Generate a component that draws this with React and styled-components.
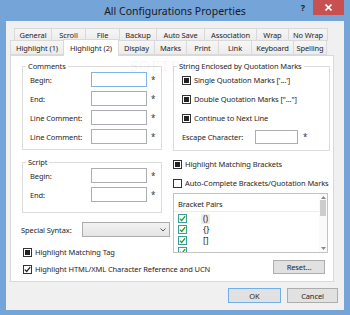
import React from 'react';
import styled, { createGlobalStyle } from 'styled-components';

const Global = createGlobalStyle`
  html, body { margin: 0; padding: 0; }
  body {
    width: 350px; height: 315px; overflow: hidden;
    font-family: "Noto Sans", "Open Sans", sans-serif;
    font-size: 7.5px; letter-spacing: -0.1px; color: #1e1e1e;
  }
  * { box-sizing: border-box; }
`;

const Window = styled.div`
  width: 350px; height: 315px; background: #74a4d8;
  display: flex; flex-direction: column; position: relative;
`;

const TitleBar = styled.div`
  height: 21px; flex: none;
  display: grid; grid-template-columns: 1fr auto 1fr; align-items: start;
`;
const Title = styled.div`
  grid-column: 2; font-size: 10.5px; letter-spacing: 0; line-height: 22px; color: #1a1a1a;
`;
const Controls = styled.div`
  grid-column: 3; justify-self: end; display: flex; align-items: flex-start; margin-right: 6px;
`;
const Help = styled.span`
  font-weight: bold; font-size: 9px; line-height: 16px; margin-right: 8px; color: #222;
`;
const Close = styled.div`
  width: 31px; height: 15px; background: #c75050;
  display: flex; align-items: center; justify-content: center;
`;

const Client = styled.div`
  flex: 1; margin: 0 6px 5px 6px; background: #f0f0f0;
  padding: 7px 6px 0 4px; display: flex; flex-direction: column;
`;

const TabRow = styled.div`
  display: flex; align-items: flex-end; height: ${p => p.$h}px;
  margin-left: ${p => p.$indent}px; margin-top: ${p => p.$mt || 0}px;
`;
const Tab = styled.div`
  width: ${p => p.$w}px; height: 100%; flex: none;
  border: 1px solid #d9d9d9; margin-right: -1px;
  background: linear-gradient(#f6f6f6, #ececec); color: #1e1e1e;
  display: flex; align-items: center; justify-content: center;
  white-space: nowrap; line-height: 10px;
`;
const ActiveTab = styled(Tab)`
  background: #fff; height: 17px; border-bottom: none;
  margin-bottom: -1px; position: relative; z-index: 1;
  align-items: flex-start; padding-top: 3px;
`;

const Panel = styled.div`
  width: 324px; height: 227px; flex: none; background: #fff;
  border: 1px solid #d9d9d9;
  display: grid; grid-template-columns: 149px 157px; column-gap: 3px;
  padding: 5px 0 0 10px; align-items: start;
`;
const Column = styled.div`
  display: flex; flex-direction: column; align-items: flex-start;
`;

const Group = styled.fieldset`
  margin: ${p => p.$mt || 0}px 0 0 ${p => p.$ml || 0}px;
  width: ${p => p.$w}px; min-width: 0;
  border: 1px solid #dcdcdc;
  padding: ${p => p.$pt}px 0 ${p => p.$pb}px ${p => p.$pl}px;
  display: flex; flex-direction: column; gap: ${p => p.$gap || 0}px;
`;
const Legend = styled.legend`
  padding: 0 2px; margin-left: ${p => p.$ml || 0}px; line-height: 10px;
`;

const FieldRow = styled.div`
  display: flex; align-items: center; height: 15px; margin-top: ${p => p.$mt || 0}px;
`;
const FieldLabel = styled.span`
  width: ${p => p.$w}px; flex: none; white-space: nowrap;
`;
const Input = styled.div`
  width: ${p => p.$w}px; height: ${p => p.$h || 15}px; flex: none; background: #fff;
  border: 1px solid ${p => (p.$focus ? '#7eb4ea' : '#abadb3')};
`;
const Star = styled.span`
  margin-left: ${p => p.$ml || 4}px; font-size: 8px; line-height: 8px; color: #333;
`;

const Select = styled.div`
  width: 88px; height: 15px; flex: none;
  border: 1px solid #acacac; background: linear-gradient(#f2f2f2, #e5e5e5);
  display: flex; align-items: center; justify-content: flex-end; padding-right: 3px;
`;

const CheckRow = styled.div`
  display: flex; align-items: center; gap: 3px; height: 12px; white-space: nowrap;
  margin-top: ${p => p.$mt || 0}px; margin-left: ${p => p.$ml || 0}px;
`;
const Box = styled.span`
  width: 9px; height: 9px; flex: none; background: #fff;
  border: 1px solid ${p => (p.$teal ? '#3a9e9a' : '#333')};
  display: flex; align-items: center; justify-content: center;
`;
const Mixed = styled.span`
  width: 5px; height: 5px; background: #222;
`;

const ListBox = styled.div`
  width: 155px; height: 60px; margin-top: 4px; flex: none;
  border: 1px solid #c3c3c3; display: flex; overflow: hidden; background: #fff;
`;
const ListContent = styled.div`
  flex: 1; display: flex; flex-direction: column;
`;
const ListHeader = styled.div`
  height: 18px; flex: none; border-bottom: 1px solid #ececec;
  display: flex; align-items: center; padding-left: 4px; padding-top: 2px;
`;
const ListRow = styled.div`
  height: 11px; flex: none; display: flex; align-items: center; padding-left: 4px;
  margin-top: ${p => p.$mt || 0}px;
`;
const Bracket = styled.span`
  margin-left: 14px; padding: 0 2px; line-height: 10px; font-size: 8.5px;
  background: ${p => (p.$sel ? '#ececec' : 'transparent')};
`;
const ScrollBar = styled.div`
  width: 8px; flex: none; display: flex; flex-direction: column; align-items: center;
  padding-top: 2px; background: #fafafa;
`;
const Thumb = styled.div`
  width: 6px; height: 16px; background: #cdcdcd; margin-top: 1px;
`;
const Spacer = styled.div` flex: 1; `;

const Button = styled.div`
  width: ${p => p.$w}px; height: ${p => p.$h || 15}px; flex: none;
  background: #e1e1e1; border: 1px solid ${p => (p.$focus ? '#6fb0e8' : '#adadad')};
  display: flex; align-items: center; justify-content: center;
  margin-top: ${p => p.$mt || 0}px; align-self: ${p => p.$self || 'auto'};
  margin-right: ${p => p.$mr || 0}px;
`;
const Footer = styled.div`
  display: flex; justify-content: flex-end; gap: 6px; margin-top: 6px;
`;

const Watermark = styled.div`
  position: absolute; left: 130px; top: 58px; pointer-events: none;
  color: rgba(0, 0, 0, 0.06); font-family: "Liberation Serif", serif;
  display: flex; flex-direction: column; align-items: flex-end;
`;
const WmBig = styled.span` font-size: 15px; letter-spacing: 1px; line-height: 16px; `;
const WmSmall = styled.span` font-size: 7px; line-height: 9px; margin-top: 2px; `;

const Check = ({ color = '#222' }) => (
  <svg width="7" height="7" viewBox="0 0 7 7">
    <path d="M0.8 3.6 L2.7 5.5 L6.2 1.2" fill="none" stroke={color} strokeWidth="1.3" />
  </svg>
);

const CheckBox = ({ state, teal }) => (
  <Box $teal={teal}>
    {state === 'mixed' && <Mixed />}
    {state === 'checked' && <Check color={teal ? '#2a9a2a' : '#222'} />}
  </Box>
);

const row1 = [
  ['General', 38], ['Scroll', 35], ['File', 35], ['Backup', 38],
  ['Auto Save', 49], ['Association', 53], ['Wrap', 33], ['No Wrap', 40],
];
const row2 = [
  ['Highlight (1)', 54], ['Highlight (2)', 56, true], ['Display', 37], ['Marks', 33],
  ['Print', 33], ['Link', 34], ['Keyboard', 43], ['Spelling', 34],
];

export default function App() {
  return (
    <>
      <Global />
      <Window>
        <TitleBar>
          <Title>All Configurations Properties</Title>
          <Controls>
            <Help>?</Help>
            <Close>
              <svg width="7" height="7" viewBox="0 0 7 7">
                <path d="M0.5 0.5 L6.5 6.5 M6.5 0.5 L0.5 6.5" stroke="#fff" strokeWidth="1.6" />
              </svg>
            </Close>
          </Controls>
        </TitleBar>
        <Client>
          <TabRow $h={13} $indent={4}>
            {row1.map(([t, w]) => <Tab key={t} $w={w}>{t}</Tab>)}
          </TabRow>
          <TabRow $h={15} $indent={0} $mt={-1}>
            {row2.map(([t, w, a]) =>
              a ? <ActiveTab key={t} $w={w}>{t}</ActiveTab> : <Tab key={t} $w={w}>{t}</Tab>
            )}
          </TabRow>
          <Panel>
            <Column>
              <Group $w={140} $ml={1} $pt={1} $pb={5} $pl={7} $gap={4}>
                <Legend $ml={-4}>Comments</Legend>
                <FieldRow><FieldLabel $w={61}>Begin:</FieldLabel><Input $w={56} $focus /><Star>*</Star></FieldRow>
                <FieldRow><FieldLabel $w={61}>End:</FieldLabel><Input $w={56} /><Star>*</Star></FieldRow>
                <FieldRow><FieldLabel $w={61}>Line Comment:</FieldLabel><Input $w={56} /><Star>*</Star></FieldRow>
                <FieldRow><FieldLabel $w={61}>Line Comment:</FieldLabel><Input $w={56} /><Star>*</Star></FieldRow>
              </Group>
              <Group $w={140} $ml={1} $mt={7} $pt={1} $pb={10} $pl={7} $gap={4}>
                <Legend $ml={-4}>Script</Legend>
                <FieldRow><FieldLabel $w={61}>Begin:</FieldLabel><Input $w={56} /><Star>*</Star></FieldRow>
                <FieldRow><FieldLabel $w={61}>End:</FieldLabel><Input $w={56} /><Star>*</Star></FieldRow>
              </Group>
              <FieldRow $mt={9}>
                <FieldLabel $w={61}>Special Syntax:</FieldLabel>
                <Select>
                  <svg width="6" height="4" viewBox="0 0 6 4">
                    <path d="M0.5 0.5 L3 3 L5.5 0.5" fill="none" stroke="#555" strokeWidth="1" />
                  </svg>
                </Select>
              </FieldRow>
              <CheckRow $mt={9} $ml={2}><CheckBox state="mixed" />Highlight Matching Tag</CheckRow>
              <CheckRow $mt={5} $ml={2}><CheckBox state="checked" />Highlight HTML/XML Character Reference and UCN</CheckRow>
            </Column>
            <Column>
              <Group $w={157} $pt={3} $pb={6} $pl={8}>
                <Legend $ml={-5}>String Enclosed by Quotation Marks</Legend>
                <CheckRow><CheckBox state="mixed" />Single Quotation Marks ['...']</CheckRow>
                <CheckRow $mt={7}><CheckBox state="mixed" />Double Quotation Marks ["..."]</CheckRow>
                <CheckRow $mt={7}><CheckBox state="mixed" />Continue to Next Line</CheckRow>
                <FieldRow $mt={5}>
                  <FieldLabel $w={73}>Escape Character:</FieldLabel>
                  <Input $w={43} $h={14} /><Star $ml={5}>*</Star>
                </FieldRow>
              </Group>
              <CheckRow $mt={7}><CheckBox state="mixed" />Highlight Matching Brackets</CheckRow>
              <CheckRow $mt={7}><CheckBox state="none" />Auto-Complete Brackets/Quotation Marks</CheckRow>
              <ListBox>
                <ListContent>
                  <ListHeader>Bracket Pairs</ListHeader>
                  <ListRow $mt={1}><CheckBox state="checked" teal /><Bracket $sel>()</Bracket></ListRow>
                  <ListRow><CheckBox state="checked" teal /><Bracket>{'{}'}</Bracket></ListRow>
                  <ListRow><CheckBox state="checked" teal /><Bracket>[]</Bracket></ListRow>
                  <ListRow><CheckBox state="checked" teal /></ListRow>
                </ListContent>
                <ScrollBar>
                  <svg width="5" height="3" viewBox="0 0 5 3"><path d="M0 3 L2.5 0 L5 3 Z" fill="#888" /></svg>
                  <Thumb />
                  <Spacer />
                  <svg width="5" height="3" viewBox="0 0 5 3" style={{ marginBottom: 2 }}><path d="M0 0 L2.5 3 L5 0 Z" fill="#888" /></svg>
                </ScrollBar>
              </ListBox>
              <Button $w={52} $h={14} $mt={7} $self="flex-end" $mr={5}>Reset...</Button>
            </Column>
          </Panel>
          <Footer>
            <Button $w={53} $focus>OK</Button>
            <Button $w={51}>Cancel</Button>
          </Footer>
        </Client>
        <Watermark>
          <WmBig>SOFTPEDIA</WmBig>
          <WmSmall>www.softpedia.com</WmSmall>
        </Watermark>
      </Window>
    </>
  );
}
